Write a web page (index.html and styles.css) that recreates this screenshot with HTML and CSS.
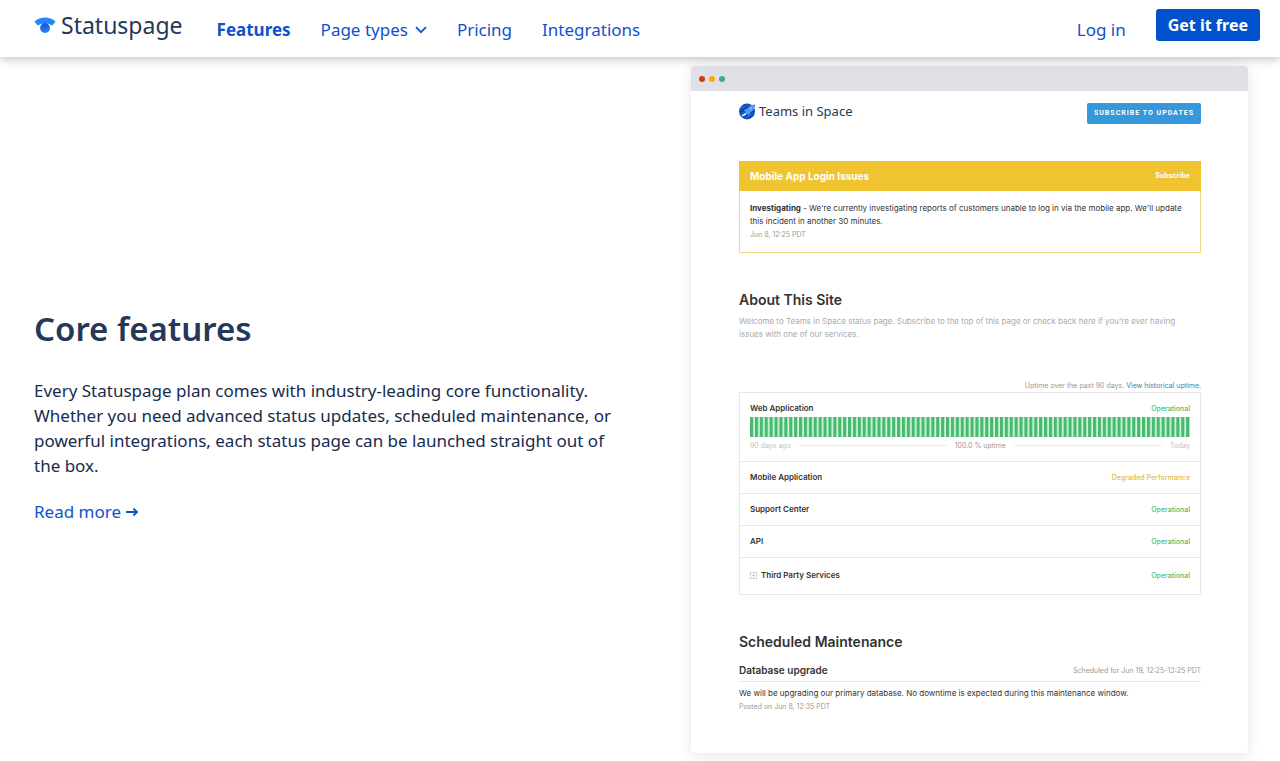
FILE: index.html
```html
<!DOCTYPE html>
<html lang="en">
<head>
<meta charset="utf-8">
<title>Statuspage features</title>
<meta name="viewport" content="width=device-width, initial-scale=1">
<link rel="stylesheet" href="styles.css">
</head>
<body>
<header class="site-header">
  <a class="brand" href="#">
    <svg class="brand-mark" viewBox="0 0 22 16" aria-hidden="true">
      <defs><linearGradient id="dot" x1="0" y1="0" x2="0" y2="1"><stop offset="0" stop-color="#0a55d2"/><stop offset="1" stop-color="#2684ff"/></linearGradient></defs>
      <path fill="#2684ff" d="M.9 4.200C6.500-.8 15.500-.8 21.100 4.200c.3.300.3.600.1.900l-2.700 3.200c-.3.300-.7.300-1 0C14 5.400 8 5.400 4.500 8.300c-.3.300-.7.300-1 0L.8 5.100c-.2-.3-.2-.6.1-.9z"/>
      <circle cx="11" cy="11" r="4.900" fill="url(#dot)"/>
    </svg>
    <span class="brand-name">Statuspage</span>
  </a>
  <nav class="main-nav">
    <a class="nav-link nav-current" href="#">Features</a>
    <button class="nav-link nav-menu" type="button">Page types
      <svg class="chevron" viewBox="0 0 12 8" aria-hidden="true"><path d="M1 1.200l5 5 5-5" fill="none" stroke="currentColor" stroke-width="1.700"/></svg>
    </button>
    <a class="nav-link" href="#">Pricing</a>
    <a class="nav-link" href="#">Integrations</a>
  </nav>
  <div class="account">
    <a class="nav-link" href="#">Log in</a>
    <button class="cta" type="button">Get it free</button>
  </div>
</header>

<main class="feature">
  <section class="intro">
    <h1 class="intro-title">Core features</h1>
    <p class="intro-text">Every Statuspage plan comes with industry-leading core functionality. Whether you need advanced status updates, scheduled maintenance, or powerful integrations, each status page can be launched straight out of the box.</p>
    <a class="read-more" href="#">Read more
      <svg class="arrow" viewBox="0 0 13 10" aria-hidden="true"><path d="M0 5h11M7.500 1.500L11 5 7.500 8.500" fill="none" stroke="currentColor" stroke-width="1.800"/></svg>
    </a>
  </section>

  <section class="window">
    <div class="window-bar"><span class="light red"></span><span class="light amber"></span><span class="light green"></span></div>
    <div class="status">
      <div class="status-head">
        <div class="team">
          <svg class="team-mark" viewBox="0 0 18 18" aria-hidden="true">
            <circle cx="8.500" cy="9" r="8.400" fill="#0b4bb3"/>
            <path d="M1 6c4-1 6-4 10-4M1 12c3 0 4-3 7-4M7 16c3-1 4-4 8-5" stroke="#1f66cc" stroke-width="1.600" fill="none"/>
            <path d="M17.500 1.500c-4 0-7 2-9 4.500L5 7.500l1.500 1L8.500 11 10 13.500l2-3.500c3-1.800 5-4.500 5.500-8.500z" fill="#4c9aff"/>
            <path d="M2.500 13.200l6-3.700-1.500 3.300-3.500 1.500zM11.500 6l1.700-1.200-.4 2z" fill="#e6f1ff"/>
          </svg>
          <span class="team-name">Teams in Space</span>
        </div>
        <button class="subscribe" type="button">SUBSCRIBE TO UPDATES</button>
      </div>

      <article class="incident">
        <header class="incident-head">
          <h2 class="incident-title">Mobile App Login Issues</h2>
          <a class="incident-link" href="#">Subscribe</a>
        </header>
        <div class="incident-body">
          <p class="copy"><strong>Investigating</strong> - We're currently investigating reports of customers unable to log in via the mobile app. We'll update this incident in another 30 minutes.</p>
          <p class="note">Jun 8, 12:25 PDT</p>
        </div>
      </article>

      <section class="about">
        <h2 class="section-title">About This Site</h2>
        <p class="about-text">Welcome to Teams in Space status page. Subscribe to the top of this page or check back here if you're ever having issues with one of our services.</p>
      </section>

      <p class="uptime-note">Uptime over the past 90 days. <a class="history" href="#">View historical uptime.</a></p>
      <ul class="components">
        <li class="component component-chart">
          <div class="component-row"><span class="component-name">Web Application</span><span class="ok">Operational</span></div>
          <svg class="bars" viewBox="0 0 440 20" preserveAspectRatio="none" aria-hidden="true">
            <defs><pattern id="day" width="4.900" height="20" patternUnits="userSpaceOnUse"><rect width="4.900" height="20" fill="#d8f5e3"/><rect width="3.200" height="20" fill="#46bb6d"/></pattern></defs>
            <rect width="440" height="20" fill="url(#day)"/>
          </svg>
          <div class="legend"><span>90 days ago</span><span class="rule"></span><span class="percent">100.0 % uptime</span><span class="rule"></span><span>Today</span></div>
        </li>
        <li class="component component-row"><span class="component-name">Mobile Application</span><span class="degraded">Degraded Performance</span></li>
        <li class="component component-row"><span class="component-name">Support Center</span><span class="ok">Operational</span></li>
        <li class="component component-row"><span class="component-name">API</span><span class="ok">Operational</span></li>
        <li class="component component-row component-group">
          <span class="component-name"><svg class="plus" viewBox="0 0 7 7" aria-hidden="true"><path d="M.5.5h6v6h-6zM2 3.500h3M3.500 2v3" fill="none" stroke="#c5c5c5" stroke-width=".8"/></svg>Third Party Services</span>
          <span class="ok">Operational</span>
        </li>
      </ul>

      <section class="maintenance">
        <h2 class="section-title">Scheduled Maintenance</h2>
        <div class="maintenance-head"><h3 class="maintenance-title">Database upgrade</h3><span class="note">Scheduled for Jun 19, 12:25-13:25 PDT</span></div>
        <p class="copy">We will be upgrading our primary database. No downtime is expected during this maintenance window.</p>
        <p class="note">Posted on Jun 8, 12:35 PDT</p>
      </section>
    </div>
  </section>
</main>
</body>
</html>
```
FILE: styles.css
```css
* { box-sizing: border-box; }
body { margin: 0; background: #fff; color: #172b4d; font-family: "Noto Sans", "Open Sans", sans-serif; }
h1, h2, h3, p, ul { margin: 0; padding: 0; }
a { text-decoration: none; }
button { border: 0; margin: 0; padding: 0; background: none; font: inherit; cursor: pointer; }

.site-header { position: relative; z-index: 1; display: flex; align-items: flex-start; height: 57px; padding: 0 20px 0 34px; background: #fff; box-shadow: 0 1px 10px rgba(0, 0, 0, 0.3); }
.brand { display: flex; gap: 5px; color: #253858; }
.brand-mark { width: 22px; height: 16px; margin-top: 17px; }
.brand-name { margin-top: 9px; font-size: 23px; line-height: 32px; }
.main-nav { display: flex; gap: 30px; margin-left: 34px; }
.nav-link { margin-top: 18px; color: #0f52cc; font-size: 17px; line-height: 24px; }
.nav-current { font-weight: 700; }
.nav-menu { display: flex; align-items: center; gap: 7px; }
.chevron { width: 12px; height: 8px; }
.account { display: flex; align-items: flex-start; gap: 30px; margin-left: auto; }
.cta { margin-top: 9px; padding: 0 12px; border-radius: 3px; background: #0052cc; color: #fff; font-size: 16px; font-weight: 700; line-height: 32px; }

.feature { display: grid; grid-template-columns: 580px 1fr; gap: 77px; align-items: center; padding: 9px 32px 8px 34px; }
.intro { padding-top: 12px; }
.intro-title { font-size: 33px; font-weight: 600; line-height: 44px; color: #253858; }
.intro-text { margin-top: 27px; font-size: 17px; line-height: 25px; }
.read-more { display: flex; align-items: center; gap: 5px; margin-top: 21px; color: #0f52cc; font-size: 17px; line-height: 25px; }
.arrow { width: 13px; height: 10px; }

.window { overflow: hidden; border-radius: 4px; background: #fff; box-shadow: 0 2px 14px rgba(9, 30, 66, 0.12); }
.window-bar { display: flex; align-items: center; gap: 4px; height: 25px; padding-left: 8px; background: #dfe1e6; }
.light { width: 6px; height: 6px; border-radius: 50%; }
.red { background: #de350b; }
.amber { background: #ffab00; }
.green { background: #36b37e; }

.status { padding: 12px 47px 40px 48px; font-family: Inter, "Liberation Sans", sans-serif; color: #333; font-size: 8px; line-height: 13px; }
.status-head { display: flex; justify-content: space-between; align-items: flex-start; }
.team { display: flex; gap: 3px; }
.team-mark { width: 17px; height: 17px; }
.team-name { font-family: "Noto Sans", sans-serif; font-size: 13px; line-height: 17px; color: #253858; }
.subscribe { padding: 0 7px; border-radius: 2px; background: #3498db; color: #fff; font-family: Roboto, sans-serif; font-size: 7px; font-weight: 700; line-height: 21px; letter-spacing: 1px; }

.incident { margin-top: 37px; border: 1px solid #eedd87; }
.incident-head { display: flex; justify-content: space-between; align-items: center; margin: -1px -1px 0; padding: 0 11px; background: #f0c430; line-height: 30px; color: #fff; }
.incident-title { font-size: 10px; }
.incident-link { color: #fff; font-size: 7px; font-weight: 700; }
.incident-body { padding: 11px 10px; }
.copy { font-size: 8px; }
.note { color: #999; font-size: 7px; }

.about { margin-top: 37px; }
.section-title { font-size: 14px; font-weight: 600; line-height: 20px; }
.about-text { max-width: 450px; margin-top: 5px; color: #aaa; }

.uptime-note { margin-top: 38px; color: #999; font-size: 7px; text-align: right; }
.history { color: #3b82b5; }
.components { border: 1px solid #e7e7e7; border-radius: 1px; list-style: none; }
.component { padding: 9px 10px; }
.component + .component { border-top: 1px solid #e7e7e7; }
.component-row { display: flex; justify-content: space-between; align-items: center; }
.component-name { display: flex; align-items: center; gap: 4px; font-weight: 600; }
.ok { color: #4bbf73; font-size: 7px; font-weight: 500; }
.degraded { color: #dfbd48; font-size: 7px; font-weight: 500; }
.bars { display: block; width: 100%; height: 20px; margin-top: 2px; }
.legend { display: flex; align-items: center; gap: 8px; margin-top: 2px; color: #c3c3c3; font-size: 7px; }
.rule { flex: 1; height: 1px; background: #ececec; }
.percent { color: #999; }
.component-group { padding: 11px 10px 12px; }
.plus { width: 7px; height: 7px; }

.maintenance { margin-top: 37px; }
.maintenance-head { display: flex; justify-content: space-between; align-items: center; margin: 11px 0 5px; padding-bottom: 3px; border-bottom: 1px solid #e7e7e7; }
.maintenance-title { font-size: 10px; font-weight: 600; line-height: 15px; }
```
